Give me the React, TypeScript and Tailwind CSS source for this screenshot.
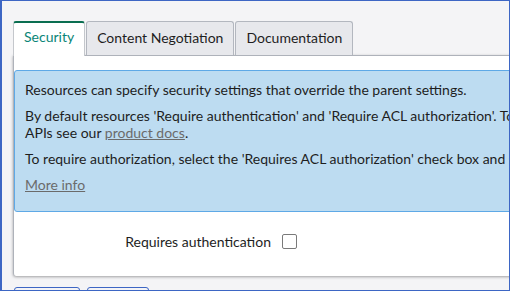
import { useState } from 'react'

const TABS = ['Security', 'Content Negotiation', 'Documentation']

function Tab({ label, active, onClick }: { label: string; active: boolean; onClick: () => void }) {
  if (active) {
    return (
      <button
        onClick={onClick}
        className="relative z-10 -mb-px h-[35px] rounded-t-[3px] border-x border-t-2 border-x-[#c4c7cc] border-t-[#0a6e50] bg-white px-[10px] pb-[6px] text-[14px] text-[#0a8577]"
      >
        {label}
      </button>
    )
  }
  return (
    <button
      onClick={onClick}
      className="mt-px h-[34px] rounded-t-[3px] border border-b-0 border-[#b3b7bf] bg-[#e7e8ec] px-[10px] pb-[2px] text-[14px] text-[#1e1e1e]"
    >
      {label}
    </button>
  )
}

export default function App() {
  const [tab, setTab] = useState(0)
  const [auth, setAuth] = useState(false)

  return (
    <div
      className="flex h-[291px] w-[510px] flex-col overflow-hidden border-y border-l-2 border-r border-[#3d66c4] bg-[#f4f4f6] text-[#1e1e1e]"
      style={{ fontFamily: 'Lato, "Open Sans", sans-serif' }}
    >
      <div className="w-[800px] pl-[11px] pt-[19px]">
        <div className="flex items-end gap-px">
          {TABS.map((t, i) => (
            <Tab key={t} label={t} active={tab === i} onClick={() => setTab(i)} />
          ))}
        </div>

        <div className="h-[221px] rounded-bl-[3px] border-l border-t border-[#aeb2ba] bg-white shadow-[0_1px_3px_rgba(0,0,0,0.35)]">
          <div className="mt-[14px] rounded-l-[3px] border border-[#5ea9e6] bg-[#bddcf1] pb-[9px] pl-[10px] pt-[10px] text-[14px] leading-[17px] whitespace-nowrap">
            <p className="mb-[9px]">Resources can specify security settings that override the parent settings.</p>
            <p className="mb-[9px]">
              By default resources 'Require authentication' and 'Require ACL authorization'. To learn more about securing scripted REST
              <br />
              APIs see our <a href="#" className="text-[#6b6b6b] underline">product docs</a>.
            </p>
            <p className="mb-[9px]">
              To require authorization, select the 'Requires ACL authorization' check box and select an ACL from the list.
            </p>
            <p className="mb-[9px]">
              <a href="#" className="text-[#6b6b6b] underline">More info</a>
            </p>
          </div>

          <label className="mt-[19px] flex items-center text-[14px]">
            <span className="w-[257px] text-right">Requires authentication</span>
            <input
              type="checkbox"
              checked={auth}
              onChange={() => setAuth(!auth)}
              className="ml-[11px] h-[15px] w-[15px] appearance-none rounded-[2px] border border-[#7a7a7a] bg-white"
            />
          </label>
        </div>

        <div className="mt-[11px] flex gap-[7px] pl-px">
          <div className="h-[10px] w-[66px] rounded-t-[3px] border border-[#3d66c4] bg-[#f4f4f6]" />
          <div className="h-[10px] w-[62px] rounded-t-[3px] border border-[#3d66c4] bg-[#f4f4f6]" />
        </div>
      </div>
    </div>
  )
}
